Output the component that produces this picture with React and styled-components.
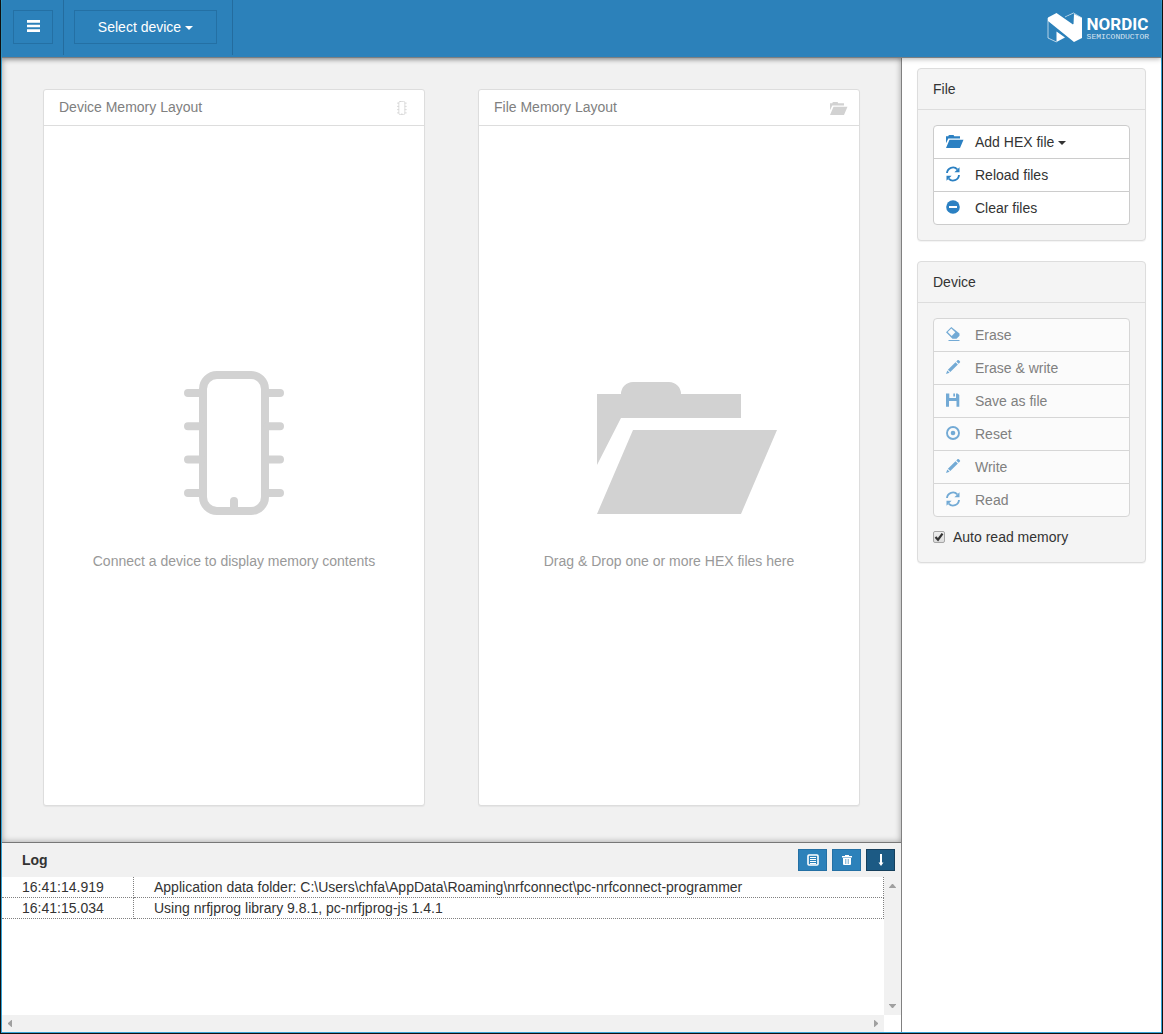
import React from 'react';
import styled, { createGlobalStyle } from 'styled-components';

const blue = '#2c81ba';
const iconBlue = '#2b80c2';

const Global = createGlobalStyle`
  *, *::before, *::after { box-sizing: border-box; }
  body {
    margin: 0;
    font: 14px/20px "Liberation Sans", Arial, sans-serif;
    color: #333;
    background: #fff;
  }
  button, input { font: inherit; color: inherit; margin: 0; }
`;

const Frame = styled.div`
  padding: 0 1px 1px;
  background: #111;
`;

const Shell = styled.div`
  display: flex;
  min-height: calc(100vh - 1px);
  flex-direction: column;
  background: #fff;
  border: 1px solid #36a3d6;
  border-top: 0;
`;

const Header = styled.header`
  position: relative;
  z-index: 2;
  display: flex;
  height: 58px;
  background: ${blue};
  border-bottom: 1px solid #7b7f82;
  box-shadow: 0 1px 5px rgba(0, 0, 0, 0.3);
`;

const HeaderCell = styled.div`
  height: 55px;
  padding: 10px ${p => (p.$narrow ? 10 : 15)}px 0 10px;
  border-right: 1px solid #246c9e;
  &:first-child { padding-left: 11px; }
`;

const HeaderButton = styled.button`
  display: flex;
  align-items: center;
  justify-content: center;
  gap: 4px;
  height: 34px;
  width: ${p => (p.$wide ? 143 : 40)}px;
  padding: 0 0 ${p => (p.$wide ? 0 : 2)}px;
  color: #fff;
  background: ${blue};
  border: 1px solid #2470a4;
`;

const Caret = styled.span`
  margin-top: 2px;
  border: 4px solid transparent;
  border-top-color: currentColor;
  border-bottom: 0;
`;

const Brand = styled.div`
  display: flex;
  align-items: flex-start;
  gap: 4px;
  margin-left: auto;
  padding: 12px 12px 0 0;
  color: #fff;
`;

const Wordmark = styled.div`
  display: flex;
  flex-direction: column;
  padding-top: 3px;
`;

const BrandName = styled.span`
  font: bold 17px/18px Roboto, sans-serif;
`;

const BrandSub = styled.span`
  font: 8px/8px "Liberation Mono", monospace;
  opacity: 0.8;
`;

const Body = styled.div`
  display: flex;
  flex: 1;
`;

const Left = styled.div`
  display: flex;
  flex: 1;
  flex-direction: column;
  min-width: 0;
  border-right: 1px solid #808080;
`;

const Canvas = styled.main`
  display: flex;
  flex: 1;
  gap: 53px;
  padding: 31px 41px 36px;
  background: #f1f1f1;
  border-bottom: 1px solid #777;
  box-shadow: inset 0 0 6px rgba(0, 0, 0, 0.35);
`;

const Card = styled.section`
  display: flex;
  flex: 1;
  flex-direction: column;
  background: #fff;
  border: 1px solid #ddd;
  border-radius: 3px;
  box-shadow: 0 1px 1px rgba(0, 0, 0, 0.05);
`;

const CardHead = styled.div`
  display: flex;
  align-items: flex-start;
  justify-content: space-between;
  height: 36px;
  padding: 7px 12px 0 15px;
  color: #808080;
  border-bottom: 1px solid #ddd;
`;

const CardTitle = styled.h2`
  margin: 0;
  font-size: 14px;
  font-weight: normal;
`;

const HeadIcon = styled.span`
  display: flex;
  align-items: center;
  justify-content: center;
  width: 20px;
  height: 22px;
`;

const CardBody = styled.div`
  display: flex;
  flex: 1;
  flex-direction: column;
  align-items: center;
  justify-content: center;
  gap: 36px;
  padding-top: 10px;
  color: #999;
`;

const Side = styled.aside`
  display: flex;
  flex-direction: column;
  gap: 20px;
  width: 259px;
  padding: 10px 15px;
`;

const Panel = styled.section`
  background: #f4f4f4;
  border: 1px solid #ddd;
  border-radius: 4px;
  box-shadow: 0 1px 1px rgba(0, 0, 0, 0.05);
`;

const PanelTitle = styled.h3`
  margin: 0;
  padding: 10px 15px;
  font-size: 14px;
  font-weight: normal;
  border-bottom: 1px solid #ddd;
`;

const PanelBody = styled.div`
  padding: 15px;
`;

const Group = styled.div`
  display: flex;
  flex-direction: column;
`;

const Action = styled.button`
  display: flex;
  align-items: center;
  height: 34px;
  padding: 0 12px;
  text-align: left;
  background: #fff;
  border: 1px solid #ccc;
  & + & { margin-top: -1px; }
  &:first-child { border-radius: 4px 4px 0 0; }
  &:last-child { border-radius: 0 0 4px 4px; }
  &:disabled { color: #808080; background: #fbfbfb; border-color: #d6d6d6; }
  &:disabled svg { opacity: 0.65; }
`;

const ActionIcon = styled.span`
  display: flex;
  width: 29px;
  padding-bottom: 2px;
  color: ${iconBlue};
`;

const ActionLabel = styled.span`
  margin-right: 4px;
`;

const CheckLabel = styled.label`
  display: flex;
  align-items: center;
  gap: 8px;
  margin-top: 10px;
`;

const CheckWrap = styled.span`
  position: relative;
  display: flex;
`;

const Check = styled.input`
  appearance: none;
  width: 12px;
  height: 12px;
  border: 1px solid #a6a6a6;
  border-radius: 2px;
  background: linear-gradient(#eee, #dcdcdc);
  & + svg { display: none; position: absolute; inset: 0; pointer-events: none; }
  &:checked + svg { display: block; }
`;

const Log = styled.section`
  display: flex;
  flex-direction: column;
  height: 189px;
`;

const LogHead = styled.div`
  display: flex;
  align-items: center;
  justify-content: space-between;
  height: 34px;
  padding: 0 6px 0 20px;
  background: #f1f1f1;
`;

const LogTitle = styled.h3`
  margin: 0;
  font-size: 14px;
`;

const LogTools = styled.div`
  display: flex;
  gap: 5px;
`;

const LogButton = styled.button`
  display: flex;
  align-items: center;
  justify-content: center;
  width: 29px;
  height: 22px;
  padding: 0;
  color: #fff;
  background: ${p => (p.$active ? '#1c5a84' : blue)};
  border: 1px solid ${p => (p.$active ? '#163f5c' : '#2470a4')};
`;

const LogView = styled.div`
  display: grid;
  flex: 1;
  grid-template-columns: 1fr 17px;
  grid-template-rows: 1fr 17px;
`;

const LogTable = styled.table`
  width: 100%;
  border-spacing: 0;
  align-self: start;
`;

const Cell = styled.td`
  height: 21px;
  padding: 0 0 0 20px;
  border-right: 1px dotted #808080;
  border-bottom: 1px dotted #808080;
  &:first-child { width: 132px; }
`;

const Scroll = styled.div`
  display: flex;
  flex-direction: ${p => (p.$vertical ? 'column' : 'row')};
  align-items: center;
  justify-content: space-between;
  padding: ${p => (p.$vertical ? '7px 0' : '0 6px')};
  background: #f1f1f1;
`;

const turns = { up: 0, right: 90, down: 180, left: 270 };

const Arrow = ({ to }) => {
  const upright = to === 'up' || to === 'down';
  return (
    <svg width={upright ? 7 : 4} height={upright ? 4 : 7} viewBox={upright ? '-3.5 -2 7 4' : '-2 -3.5 4 7'}>
      <path d="M-3.5 2V1.500L-0.500 -2H0.500L3.5 1.500V2z" fill="#a0a0a0" transform={`rotate(${turns[to]})`} />
    </svg>
  );
};

const FolderIcon = ({ size, color = 'currentColor' }) => (
  <svg width={size} height={size} viewBox="0 -11 144 144" overflow="visible" fill={color}>
    <path d="M24 12A12 12 0 0 1 36 0H72A12 12 0 0 1 84 12H144V36H24L0 83V12zM36 48H180L144 132H0z" />
  </svg>
);

const ChipIcon = ({ height, color = '#d2d2d2' }) => (
  <svg height={height} viewBox="0 0 100 144" fill="none" stroke={color} strokeWidth="8" strokeLinecap="round">
    <rect x="19" y="4" width="62" height="136" rx="14" />
    <path d="M4 22H17M4 55.300H17M4 88.600H17M4 122H17M83 22H96M83 55.300H96M83 88.600H96M83 122H96M50 130V138" />
  </svg>
);

const Glyph = ({ children }) => (
  <svg width="14" height="14" viewBox="1 1 14 14" overflow="visible" fill="currentColor">{children}</svg>
);

const RefreshIcon = () => (
  <Glyph>
    <path d="M2 7A6 6 0 0 1 12.300 3.300M14 9A6 6 0 0 1 3.700 12.700" fill="none" stroke="currentColor" strokeWidth="1.900" />
    <path d="M14.500 1.200V6.300H9.400zM1.500 14.800V9.700H6.600z" />
  </Glyph>
);

const MinusIcon = () => (
  <Glyph>
    <circle cx="8" cy="8" r="6.800" />
    <rect x="4" y="7" width="8" height="2" fill="#fff" />
  </Glyph>
);

const EraserIcon = () => (
  <Glyph>
    <path d="M6.300 1L14.500 7.600V9.800L11.500 12.700H7.500L1 6.200zM6.300 2.500L2.700 6.100L6.700 10L10.300 6.200z" fillRule="evenodd" />
    <rect x="3.500" y="14" width="11" height="1" />
  </Glyph>
);

const PencilIcon = () => (
  <Glyph>
    <path d="M11.300 2.400L12.700 1.100Q13.300.7 13.900 1.200L15 2.400Q15.400 2.900 14.900 3.500L13.600 4.800zM10.500 3.200L12.900 5.600L5.300 13.100L2.900 10.800zM2.300 11.500L4.600 13.800L1 15z" />
  </Glyph>
);

const SaveIcon = () => (
  <Glyph>
    <path d="M1 1.500H4.300V6H11V1.500H12.500L14.300 3V14.800H11.500V9H4V14.800H1zM8.300 1.500H10V4.500H8.300z" />
  </Glyph>
);

const RecordIcon = () => (
  <Glyph>
    <circle cx="8" cy="8" r="6" fill="none" stroke="currentColor" strokeWidth="1.900" />
    <circle cx="8" cy="8" r="2.300" />
  </Glyph>
);

const MenuIcon = () => (
  <svg width="13" height="12" viewBox="0 0 13 12" fill="currentColor">
    <path d="M0 0H13V2.700H0zM0 4.700H13V7.300H0zM0 9.300H13V12H0z" />
  </svg>
);

const ListIcon = () => (
  <svg width="12" height="12" viewBox="0 0 12 12" fill="none" stroke="currentColor">
    <rect x="1" y="1" width="10" height="10" rx="1" strokeWidth="1.600" />
    <path d="M3 3.500H9M3 5.500H9M3 7.500H9M3 9.500H9" />
  </svg>
);

const TrashIcon = () => (
  <svg width="12" height="12" viewBox="0 0 12 12" fill="currentColor">
    <path d="M1 2H4V1H8V2H11V3.500H1zM2 4H10V10Q10 11 9 11H3Q2 11 2 10zM4 5V10H4.500V5zM5.800 5V10H6.200V5zM7.500 5V10H8V5z" fillRule="evenodd" />
  </svg>
);

const DownIcon = () => (
  <svg width="12" height="12" viewBox="0 0 12 12" fill="currentColor">
    <path d="M5 0H7V8.500H8.500L6 12L3.500 8.500H5z" />
  </svg>
);

const LogoMark = () => (
  <svg width="36" height="31" viewBox="0 0 36 31">
    <path d="M1 6V26L9.500 30M18 5L26.500 1L35 6" fill="none" stroke="#fff" strokeWidth="0.800" strokeOpacity="0.800" />
    <path d="M1 5.500L9.500 1L26 12.500L27 2L35 6V26L27 30L1 9zM9.500 19.500L18 25.500L9.500 30z" fill="#fff" />
    <path d="M18.500 5.300L26.500 2.200V12.300z" fill={blue} />
  </svg>
);

const fileActions = [
  { label: 'Add HEX file', icon: <FolderIcon size={14} />, caret: true },
  { label: 'Reload files', icon: <RefreshIcon /> },
  { label: 'Clear files', icon: <MinusIcon /> },
];

const deviceActions = [
  { label: 'Erase', icon: <EraserIcon /> },
  { label: 'Erase & write', icon: <PencilIcon /> },
  { label: 'Save as file', icon: <SaveIcon /> },
  { label: 'Reset', icon: <RecordIcon /> },
  { label: 'Write', icon: <PencilIcon /> },
  { label: 'Read', icon: <RefreshIcon /> },
];

const entries = [
  ['16:41:14.919', 'Application data folder: C:\\Users\\chfa\\AppData\\Roaming\\nrfconnect\\pc-nrfconnect-programmer'],
  ['16:41:15.034', 'Using nrfjprog library 9.8.1, pc-nrfjprog-js 1.4.1'],
];

const Actions = ({ items, disabled }) => (
  <Group>
    {items.map(a => (
      <Action key={a.label} type="button" disabled={disabled}>
        <ActionIcon>{a.icon}</ActionIcon>
        <ActionLabel>{a.label}</ActionLabel>
        {a.caret && <Caret />}
      </Action>
    ))}
  </Group>
);

export default function App() {
  return (
    <Frame>
      <Global />
      <Shell>
        <Header>
          <HeaderCell $narrow>
            <HeaderButton type="button" aria-label="Menu"><MenuIcon /></HeaderButton>
          </HeaderCell>
          <HeaderCell>
            <HeaderButton type="button" $wide>Select device<Caret /></HeaderButton>
          </HeaderCell>
          <Brand>
            <LogoMark />
            <Wordmark>
              <BrandName>NORDIC</BrandName>
              <BrandSub>SEMICONDUCTOR</BrandSub>
            </Wordmark>
          </Brand>
        </Header>
        <Body>
          <Left>
            <Canvas>
              <Card>
                <CardHead>
                  <CardTitle>Device Memory Layout</CardTitle>
                  <HeadIcon><ChipIcon height={14} /></HeadIcon>
                </CardHead>
                <CardBody>
                  <ChipIcon height={144} />
                  <span>Connect a device to display memory contents</span>
                </CardBody>
              </Card>
              <Card>
                <CardHead>
                  <CardTitle>File Memory Layout</CardTitle>
                  <HeadIcon><FolderIcon size={14} color="#d2d2d2" /></HeadIcon>
                </CardHead>
                <CardBody>
                  <FolderIcon size={144} color="#d2d2d2" />
                  <span>Drag &amp; Drop one or more HEX files here</span>
                </CardBody>
              </Card>
            </Canvas>
            <Log>
              <LogHead>
                <LogTitle>Log</LogTitle>
                <LogTools>
                  <LogButton type="button" aria-label="Open log file"><ListIcon /></LogButton>
                  <LogButton type="button" aria-label="Clear log"><TrashIcon /></LogButton>
                  <LogButton type="button" aria-label="Scroll automatically" $active><DownIcon /></LogButton>
                </LogTools>
              </LogHead>
              <LogView>
                <LogTable>
                  <tbody>
                    {entries.map(([time, text]) => (
                      <tr key={time}><Cell>{time}</Cell><Cell>{text}</Cell></tr>
                    ))}
                  </tbody>
                </LogTable>
                <Scroll $vertical><Arrow to="up" /><Arrow to="down" /></Scroll>
                <Scroll><Arrow to="left" /><Arrow to="right" /></Scroll>
              </LogView>
            </Log>
          </Left>
          <Side>
            <Panel>
              <PanelTitle>File</PanelTitle>
              <PanelBody><Actions items={fileActions} /></PanelBody>
            </Panel>
            <Panel>
              <PanelTitle>Device</PanelTitle>
              <PanelBody>
                <Actions items={deviceActions} disabled />
                <CheckLabel>
                  <CheckWrap>
                    <Check type="checkbox" defaultChecked />
                    <svg width="12" height="12" viewBox="0 0 12 12" fill="none" stroke="#333" strokeWidth="2.200">
                      <path d="M2.500 6L5 8.700L9.500 2.700" />
                    </svg>
                  </CheckWrap>
                  Auto read memory
                </CheckLabel>
              </PanelBody>
            </Panel>
          </Side>
        </Body>
      </Shell>
    </Frame>
  );
}
